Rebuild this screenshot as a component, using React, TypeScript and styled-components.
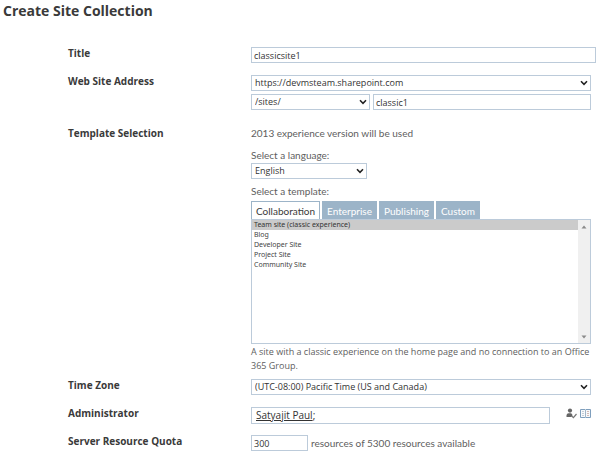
import React, { useState } from "react";
import styled, { createGlobalStyle, css } from "styled-components";

const line = "#bccbda";
const ink = "#3a3a3a";
const steel = "#9cb4c8";

const GlobalStyle = createGlobalStyle`
  *, *::before, *::after { box-sizing: border-box; }
  body {
    margin: 0;
    background: #fff;
    color: #606060;
    font: 10px/12px "Open Sans", "Noto Sans", sans-serif;
  }
`;

const Page = styled.main`
  padding: 2px 5px 8px 3px;
`;

const Heading = styled.h1`
  margin: 0 0 27px;
  color: ${ink};
  font-size: 14px;
  font-weight: 700;
  line-height: 18px;
`;

const Form = styled.form`
  display: flex;
  flex-direction: column;
  padding-left: 65px;
`;

const Row = styled.section<{ $after?: number; $wide?: boolean }>`
  display: grid;
  grid-template-columns: 183px minmax(0, 1fr);
  margin-bottom: ${(p) => p.$after ?? 12}px;
  margin-right: ${(p) => (p.$wide ? "-5px" : "0")};
`;

const labelText = css`
  color: ${ink};
  font-size: 10px;
  font-weight: 700;
  line-height: 12px;
`;

const Label = styled.label`
  ${labelText}
`;

const GroupTitle = styled.h2`
  ${labelText}
  margin: 0;
`;

const Stack = styled.div`
  display: flex;
  flex-direction: column;
`;

const Line = styled.div<{ $top?: number; $gap?: number }>`
  display: flex;
  align-items: center;
  gap: ${(p) => p.$gap ?? 3}px;
  margin-top: ${(p) => p.$top ?? 0}px;
`;

const control = css`
  height: 16px;
  margin: 0;
  border: 1px solid ${line};
  border-radius: 0;
  background: #fff;
  color: #333;
  font: 9px/14px "Open Sans", "Noto Sans", sans-serif;
`;

const TextBox = styled.input<{ $width?: string }>`
  ${control}
  width: ${(p) => p.$width ?? "100%"};
  min-width: 0;
  padding: 0 2px;
`;

const SelectFrame = styled.span<{ $width?: string }>`
  position: relative;
  display: block;
  flex: none;
  width: ${(p) => p.$width ?? "100%"};
  height: 16px;
`;

const NativeSelect = styled.select`
  ${control}
  display: block;
  width: 100%;
  padding: 0 14px 0 3px;
  appearance: none;
`;

const Chevron = styled.svg`
  position: absolute;
  top: 5px;
  right: 3px;
  width: 8px;
  height: 6px;
  pointer-events: none;
`;

const noteText = css`
  font: 10px/12px Lato, "Open Sans", sans-serif;
`;

const Note = styled.p`
  ${noteText}
  margin: 0;
`;

const FieldLabel = styled.label<{ $top: number; $bottom: number }>`
  ${noteText}
  margin: ${(p) => p.$top}px 0 ${(p) => p.$bottom}px;
`;

const Tabs = styled.div`
  display: flex;
  gap: 2px;
`;

const Tab = styled.button<{ $active: boolean }>`
  height: 18px;
  padding: 0 4px;
  border: 1px solid ${steel};
  border-bottom: 0;
  background: ${(p) => (p.$active ? "#fff" : steel)};
  color: ${(p) => (p.$active ? ink : "#fff")};
  font: 10px/16px Lato, "Open Sans", sans-serif;
`;

const ListFrame = styled.div`
  display: flex;
  height: 125px;
  border: 1px solid ${line};
`;

const TemplateList = styled.select`
  flex: 1;
  min-width: 0;
  padding: 0;
  border: 0;
  border-radius: 0;
  outline: 0;
  overflow: hidden;
  background: #fff;
  color: #444;
  font: 7px/10px "Noto Sans", "Open Sans", sans-serif;

  option {
    min-height: 10px;
    padding: 0 2px;
    line-height: 10px;
  }
  option:checked {
    background: #cbcbcb linear-gradient(#cbcbcb, #cbcbcb);
    color: #333;
  }
`;

const ScrollTrack = styled.div`
  display: flex;
  flex-direction: column;
  justify-content: space-between;
  width: 12px;
  background: #f0f0f0;
`;

const ScrollButton = styled.button`
  display: grid;
  place-items: center;
  width: 12px;
  height: 13px;
  padding: 0;
  border: 0;
  background: transparent;
`;

const Description = styled.p`
  margin: 1px 0 0;
  font-size: 9px;
  line-height: 14px;
`;

const PeopleBox = styled.div`
  flex: 1;
  min-width: 0;
  height: 17px;
  padding: 0 4px;
  border: 1px solid ${line};
  color: #333;
  font-size: 10px;
  line-height: 15px;
`;

const PersonLink = styled.a`
  color: inherit;
  text-decoration: underline;
`;

const Tools = styled.div`
  display: flex;
  gap: 3px;
  margin: 0 0 5px 13px;
`;

const IconButton = styled.button`
  display: block;
  width: 11px;
  height: 11px;
  padding: 0;
  border: 0;
  background: transparent;

  svg { display: block; }
`;

type DropdownProps = { id: string; label?: string; width?: string; value: string };

function Dropdown({ id, label, width, value }: DropdownProps) {
  return (
    <SelectFrame $width={width}>
      <NativeSelect id={id} aria-label={label} defaultValue={value}>
        <option>{value}</option>
      </NativeSelect>
      <Chevron viewBox="0 0 8 6" aria-hidden="true">
        <path d="M1 1.3 4 4.3 7 1.3" fill="none" stroke="#222" strokeWidth="1.6" />
      </Chevron>
    </SelectFrame>
  );
}

const tabNames = ["Collaboration", "Enterprise", "Publishing", "Custom"];
const templates = [
  "Team site (classic experience)",
  "Blog",
  "Developer Site",
  "Project Site",
  "Community Site",
];

export default function App() {
  const [tab, setTab] = useState(tabNames[0]);

  return (
    <Page>
      <GlobalStyle />
      <Heading>Create Site Collection</Heading>
      <Form onSubmit={(e) => e.preventDefault()}>
        <Row $wide>
          <Label htmlFor="title">Title</Label>
          <TextBox id="title" defaultValue="classicsite1" />
        </Row>

        <Row $after={17}>
          <Label htmlFor="host">Web Site Address</Label>
          <Stack>
            <Dropdown id="host" value="https://devmsteam.sharepoint.com" />
            <Line $top={3}>
              <Dropdown id="path" label="Path" width="119px" value="/sites/" />
              <TextBox aria-label="Site name" defaultValue="classic1" />
            </Line>
          </Stack>
        </Row>

        <Row $after={6}>
          <GroupTitle>Template Selection</GroupTitle>
          <Stack>
            <Note>2013 experience version will be used</Note>
            <FieldLabel htmlFor="language" $top={10} $bottom={2}>
              Select a language:
            </FieldLabel>
            <Dropdown id="language" width="116px" value="English" />
            <FieldLabel htmlFor="template" $top={6} $bottom={4}>
              Select a template:
            </FieldLabel>
            <Tabs role="tablist">
              {tabNames.map((name) => (
                <Tab
                  key={name}
                  type="button"
                  role="tab"
                  aria-selected={tab === name}
                  $active={tab === name}
                  onClick={() => setTab(name)}
                >
                  {name}
                </Tab>
              ))}
            </Tabs>
            <ListFrame>
              <TemplateList id="template" size={12} defaultValue={templates[0]}>
                {templates.map((name) => (
                  <option key={name}>{name}</option>
                ))}
              </TemplateList>
              <ScrollTrack>
                <ScrollButton type="button" aria-label="Scroll up">
                  <svg width="6" height="4" viewBox="0 0 6 4">
                    <path d="M0.5 3.5 3 0.5 5.5 3.5z" fill="#8a8a8a" />
                  </svg>
                </ScrollButton>
                <ScrollButton type="button" aria-label="Scroll down">
                  <svg width="6" height="4" viewBox="0 0 6 4">
                    <path d="M0.5 0.5 3 3.5 5.5 0.5z" fill="#8a8a8a" />
                  </svg>
                </ScrollButton>
              </ScrollTrack>
            </ListFrame>
            <Description>
              A site with a classic experience on the home page and no connection to an Office 365
              Group.
            </Description>
          </Stack>
        </Row>

        <Row>
          <Label htmlFor="zone">Time Zone</Label>
          <Dropdown id="zone" value="(UTC-08:00) Pacific Time (US and Canada)" />
        </Row>

        <Row $after={11}>
          <GroupTitle>Administrator</GroupTitle>
          <Line>
            <PeopleBox>
              <PersonLink href="#admin">Satyajit Paul</PersonLink>;
            </PeopleBox>
            <Tools>
              <IconButton type="button" aria-label="Check names">
                <svg width="11" height="11" viewBox="0 0 11 11">
                  <circle cx="4" cy="2.6" r="2.1" fill="#666" />
                  <path d="M0.5 9V7.2Q0.7 5.2 2.6 5.2H5.2L6.6 7 5.6 8.4 6 9z" fill="#666" />
                  <path d="M5.8 8 7.4 9.7 10.5 6" fill="none" stroke="#777" strokeWidth="1.2" />
                </svg>
              </IconButton>
              <IconButton type="button" aria-label="Browse">
                <svg width="11" height="11" viewBox="0 0 11 11">
                  <path d="M0.5 1.5H5L5.5 2 6 1.5H10.5V9.5H6L5.5 10 5 9.5H0.5z" fill="#f7f9fb" stroke="#7f9fbd" />
                  <path d="M5.5 2V9.5" stroke="#a3b6c8" />
                  <path d="M2 3.5H4M2 5.5H4M2 7.5H4" stroke="#c6ced6" />
                  <path d="M7 3.5H9M7 5.5H9M7 7.5H9" stroke="#d3b9b4" />
                </svg>
              </IconButton>
            </Tools>
          </Line>
        </Row>

        <Row $after={0}>
          <Label htmlFor="quota">Server Resource Quota</Label>
          <Line>
            <TextBox id="quota" $width="57px" defaultValue="300" />
            <Note as="span">resources of 5300 resources available</Note>
          </Line>
        </Row>
      </Form>
    </Page>
  );
}
